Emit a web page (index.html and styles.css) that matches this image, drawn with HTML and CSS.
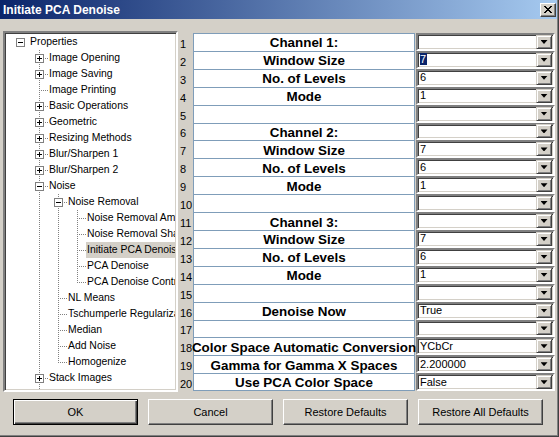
FILE: index.html
```html
<!DOCTYPE html>
<html>
<head>
<meta charset="utf-8">
<title>Initiate PCA Denoise</title>
<link rel="stylesheet" href="styles.css">
</head>
<body>
<div class="window">
  <div class="titlebar">
    <span class="title">Initiate PCA Denoise</span>
    <span class="close"><svg width="8" height="7" viewBox="0 0 8 7"><path d="M0 0h2v1H0zM6 0h2v1H6zM1 1h2v1H1zM5 1h2v1H5zM2 2h4v1H2zM3 3h2v1H3zM2 4h4v1H2zM1 5h2v1H1zM5 5h2v1H5zM0 6h2v1H0zM6 6h2v1H6z" fill="#000"/></svg></span>
  </div>
  <div class="content">
    <div class="main">
      <div class="tree">
        <div class="tree-inner">
          <div class="row"><span class="n"><span class="box minus"></span></span><span class="t">Properties</span></div>
          <div class="row"><span class="g"></span><span class="n tee"><span class="box plus"></span></span><span class="t">Image Opening</span></div>
          <div class="row"><span class="g"></span><span class="n tee"><span class="box plus"></span></span><span class="t">Image Saving</span></div>
          <div class="row"><span class="g"></span><span class="n tee"></span><span class="t">Image Printing</span></div>
          <div class="row"><span class="g"></span><span class="n tee"><span class="box plus"></span></span><span class="t">Basic Operations</span></div>
          <div class="row"><span class="g"></span><span class="n tee"><span class="box plus"></span></span><span class="t">Geometric</span></div>
          <div class="row"><span class="g"></span><span class="n tee"><span class="box plus"></span></span><span class="t">Resizing Methods</span></div>
          <div class="row"><span class="g"></span><span class="n tee"><span class="box plus"></span></span><span class="t">Blur/Sharpen 1</span></div>
          <div class="row"><span class="g"></span><span class="n tee"><span class="box plus"></span></span><span class="t">Blur/Sharpen 2</span></div>
          <div class="row"><span class="g"></span><span class="n tee"><span class="box minus"></span></span><span class="t">Noise</span></div>
          <div class="row"><span class="g"></span><span class="g v"></span><span class="n tee"><span class="box minus"></span></span><span class="t">Noise Removal</span></div>
          <div class="row"><span class="g"></span><span class="g v"></span><span class="g v"></span><span class="n tee"></span><span class="t">Noise Removal Amount</span></div>
          <div class="row"><span class="g"></span><span class="g v"></span><span class="g v"></span><span class="n tee"></span><span class="t">Noise Removal Sharpen</span></div>
          <div class="row"><span class="g"></span><span class="g v"></span><span class="g v"></span><span class="n tee"></span><span class="t sel">Initiate PCA Denoise</span></div>
          <div class="row"><span class="g"></span><span class="g v"></span><span class="g v"></span><span class="n tee"></span><span class="t">PCA Denoise</span></div>
          <div class="row"><span class="g"></span><span class="g v"></span><span class="g v"></span><span class="n end"></span><span class="t">PCA Denoise Controls</span></div>
          <div class="row"><span class="g"></span><span class="g v"></span><span class="n tee"></span><span class="t">NL Means</span></div>
          <div class="row"><span class="g"></span><span class="g v"></span><span class="n tee"></span><span class="t">Tschumperle Regularization</span></div>
          <div class="row"><span class="g"></span><span class="g v"></span><span class="n tee"></span><span class="t">Median</span></div>
          <div class="row"><span class="g"></span><span class="g v"></span><span class="n tee"></span><span class="t">Add Noise</span></div>
          <div class="row"><span class="g"></span><span class="g v"></span><span class="n end"></span><span class="t">Homogenize</span></div>
          <div class="row"><span class="g"></span><span class="n tee"><span class="box plus"></span></span><span class="t">Stack Images</span></div>
          <div class="row"><span class="g"></span><span class="n tee"><span class="box plus"></span></span><span class="t">Layers</span></div>
        </div>
      </div>
      <div class="grid">
        <span class="num">1</span><span class="lbl">Channel 1:</span><span class="combo"><span class="val"></span><span class="dd"><i class="arrow"></i></span></span>
        <span class="num">2</span><span class="lbl">Window Size</span><span class="combo"><span class="val"><span class="hl">7</span></span><span class="dd"><i class="arrow"></i></span></span>
        <span class="num">3</span><span class="lbl">No. of Levels</span><span class="combo"><span class="val">6</span><span class="dd"><i class="arrow"></i></span></span>
        <span class="num">4</span><span class="lbl">Mode</span><span class="combo"><span class="val">1</span><span class="dd"><i class="arrow"></i></span></span>
        <span class="num">5</span><span class="lbl"></span><span class="combo"><span class="val"></span><span class="dd"><i class="arrow"></i></span></span>
        <span class="num">6</span><span class="lbl">Channel 2:</span><span class="combo"><span class="val"></span><span class="dd"><i class="arrow"></i></span></span>
        <span class="num">7</span><span class="lbl">Window Size</span><span class="combo"><span class="val">7</span><span class="dd"><i class="arrow"></i></span></span>
        <span class="num">8</span><span class="lbl">No. of Levels</span><span class="combo"><span class="val">6</span><span class="dd"><i class="arrow"></i></span></span>
        <span class="num">9</span><span class="lbl">Mode</span><span class="combo"><span class="val">1</span><span class="dd"><i class="arrow"></i></span></span>
        <span class="num">10</span><span class="lbl"></span><span class="combo"><span class="val"></span><span class="dd"><i class="arrow"></i></span></span>
        <span class="num">11</span><span class="lbl">Channel 3:</span><span class="combo"><span class="val"></span><span class="dd"><i class="arrow"></i></span></span>
        <span class="num">12</span><span class="lbl">Window Size</span><span class="combo"><span class="val">7</span><span class="dd"><i class="arrow"></i></span></span>
        <span class="num">13</span><span class="lbl">No. of Levels</span><span class="combo"><span class="val">6</span><span class="dd"><i class="arrow"></i></span></span>
        <span class="num">14</span><span class="lbl">Mode</span><span class="combo"><span class="val">1</span><span class="dd"><i class="arrow"></i></span></span>
        <span class="num">15</span><span class="lbl"></span><span class="combo"><span class="val"></span><span class="dd"><i class="arrow"></i></span></span>
        <span class="num">16</span><span class="lbl">Denoise Now</span><span class="combo"><span class="val">True</span><span class="dd"><i class="arrow"></i></span></span>
        <span class="num">17</span><span class="lbl"></span><span class="combo"><span class="val"></span><span class="dd"><i class="arrow"></i></span></span>
        <span class="num">18</span><span class="lbl">Color Space Automatic Conversion</span><span class="combo"><span class="val">YCbCr</span><span class="dd"><i class="arrow"></i></span></span>
        <span class="num">19</span><span class="lbl">Gamma for Gamma X Spaces</span><span class="combo"><span class="val">2.200000</span><span class="dd"><i class="arrow"></i></span></span>
        <span class="num">20</span><span class="lbl last">Use PCA Color Space</span><span class="combo"><span class="val">False</span><span class="dd"><i class="arrow"></i></span></span>
      </div>
    </div>
    <div class="buttons">
      <span class="btn default">OK</span>
      <span class="btn">Cancel</span>
      <span class="btn">Restore Defaults</span>
      <span class="btn">Restore All Defaults</span>
    </div>
  </div>
</div>
</body>
</html>
```
FILE: styles.css
```css
* { box-sizing: border-box; }
html, body { margin: 0; padding: 0; }
body {
  width: 559px;
  height: 437px;
  overflow: hidden;
  background: #d4d0c8;
  font-family: "Liberation Sans", Arial, sans-serif;
  color: #000;
}
.window {
  width: 559px;
  height: 437px;
  padding: 0 1px 1px 0;
  border-right: 1px solid #404040;
  border-bottom: 1px solid #404040;
  box-shadow: inset -1px -1px #808080;
  background: #d4d0c8;
}
.titlebar {
  height: 19px;
  display: flex;
  align-items: center;
  justify-content: space-between;
  padding: 0 1px 0 3px;
  background: linear-gradient(to right, #0a246a, #a6caf0);
}
.title {
  color: #fff;
  font-weight: bold;
  font-size: 12px;
  line-height: 19px;
  padding-top: 1px;
  white-space: nowrap;
}
.close {
  width: 16px;
  height: 14px;
  display: flex;
  align-items: center;
  justify-content: center;
  background: #d4d0c8;
  border: 1px solid;
  border-color: #fff #404040 #404040 #fff;
  box-shadow: inset -1px -1px #808080;
}
.close svg { display: block; shape-rendering: crispEdges; }
.content { padding: 12px 0 0 3px; }
.main {
  display: flex;
  align-items: flex-start;
  height: 362px;
}
/* tree */
.tree {
  flex: 0 0 175px;
  height: 361px;
  border: 2px solid;
  border-color: #808080 #fff #fff #808080;
  box-shadow: inset 1px 1px #404040, inset -1px -1px #d4d0c8;
  background: #fff;
  padding: 1px 0 0 0;
}
.tree-inner {
  width: 169px;
  height: 355px;
  overflow: hidden;
  padding-left: 5px;
  margin-left: 1px;
}
.row {
  display: flex;
  height: 16px;
  white-space: nowrap;
}
.g, .n {
  flex: 0 0 19px;
  height: 16px;
  display: block;
}
.v {
  background: repeating-linear-gradient(to bottom, #808080 0 1px, transparent 1px 2px) 9px 0 / 1px 100% no-repeat;
}
.tee {
  background:
    repeating-linear-gradient(to bottom, #808080 0 1px, transparent 1px 2px) 9px 0 / 1px 100% no-repeat,
    repeating-linear-gradient(to right, #808080 0 1px, transparent 1px 2px) 11px 8px / 8px 1px no-repeat;
}
.end {
  background:
    repeating-linear-gradient(to bottom, #808080 0 1px, transparent 1px 2px) 9px 0 / 1px 9px no-repeat,
    repeating-linear-gradient(to right, #808080 0 1px, transparent 1px 2px) 11px 8px / 8px 1px no-repeat;
}
.box {
  display: block;
  width: 9px;
  height: 9px;
  margin: 4px 0 0 5px;
  border: 1px solid #808080;
}
.minus {
  background: linear-gradient(#000, #000) center / 5px 1px no-repeat, #fff;
}
.plus {
  background:
    linear-gradient(#000, #000) center / 5px 1px no-repeat,
    linear-gradient(#000, #000) center / 1px 5px no-repeat,
    #fff;
}
.t {
  font-size: 10.4px;
  line-height: 16px;
  height: 16px;
  padding: 0 2px 0 1px;
  margin-left: -1px;
}
.t.sel { background: #d4d0c8; }
/* grid */
.grid {
  margin-top: 2px;
  display: grid;
  grid-template-columns: 15px 222px 140px;
  grid-auto-rows: 17.92px;
}
.num {
  display: flex;
  align-items: flex-end;
  font-size: 11px;
  line-height: 14px;
  padding-left: 2px;
  white-space: nowrap;
}
.lbl {
  display: flex;
  justify-content: center;
  align-items: center;
  background: #fff;
  border: 1px solid #7f9db9;
  border-bottom: none;
  font-weight: bold;
  font-size: 13.4px;
  white-space: nowrap;
  padding-top: 1px;
}
.lbl.last { border-bottom: 1px solid #7f9db9; }
.combo {
  margin-left: 1px;
  height: 100%;
  display: flex;
  align-items: center;
  border: 2px solid;
  border-color: #808080 #fff #fff #808080;
  box-shadow: inset 1px 1px #404040, inset -1px -1px #d4d0c8;
  background: #fff;
}
.val {
  flex: 1;
  font-size: 11px;
  line-height: 13px;
  padding-left: 2px;
  white-space: nowrap;
}
.hl {
  background: #0a246a;
  color: #fff;
  padding-right: 1px;
}
.dd {
  flex: 0 0 16px;
  height: 14px;
  margin-right: 1px;
  display: flex;
  align-items: center;
  justify-content: center;
  background: #d4d0c8;
  border: 1px solid;
  border-color: #d4d0c8 #404040 #404040 #d4d0c8;
  box-shadow: inset 1px 1px #fff, inset -1px -1px #808080;
}
.arrow {
  display: block;
  width: 7px;
  height: 4px;
  background: #000;
  clip-path: polygon(0 0, 100% 0, 50% 100%);
}
/* buttons */
.buttons {
  display: flex;
  gap: 10px;
  padding: 6px 0 0 10px;
}
.btn {
  width: 125px;
  height: 26px;
  display: flex;
  align-items: center;
  justify-content: center;
  font-size: 11px;
  background: #d4d0c8;
  border: 1px solid;
  border-color: #fff #404040 #404040 #fff;
  box-shadow: inset -1px -1px #808080, inset 1px 1px #d4d0c8;
  white-space: nowrap;
}
.btn.default {
  border-color: #000;
  box-shadow: inset 1px 1px #fff, inset -1px -1px #404040, inset -2px -2px #808080;
}
```
